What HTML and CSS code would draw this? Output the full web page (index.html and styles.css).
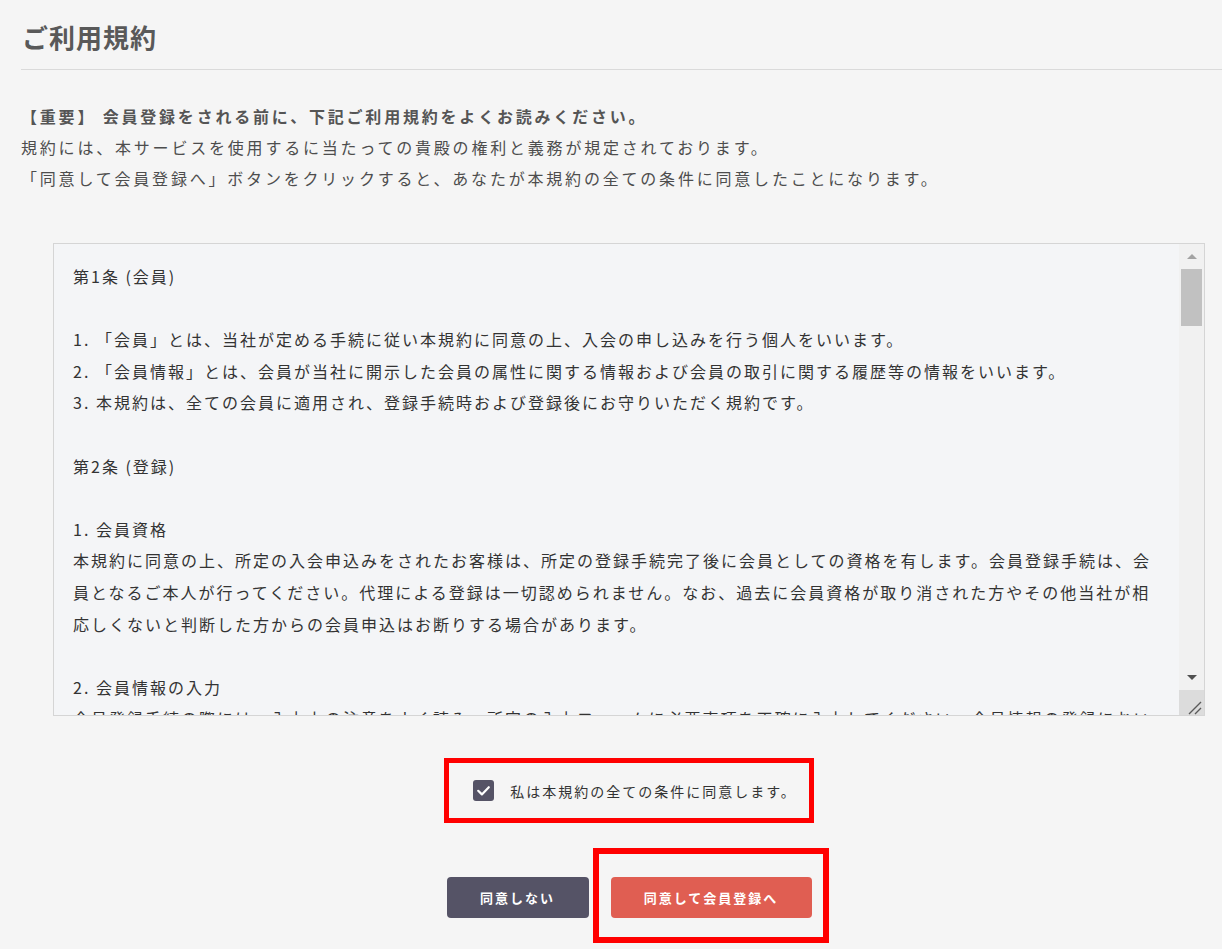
FILE: index.html
```html
<!DOCTYPE html>
<html lang="ja">
<head>
<meta charset="utf-8">
<title>ご利用規約</title>
<link rel="stylesheet" href="styles.css">
</head>
<body>
<div class="page">
  <div class="title-bar">
    <h1 class="title">ご利用規約</h1>
  </div>
  <p class="intro"><strong>【重要】 会員登録をされる前に、下記ご利用規約をよくお読みください。</strong><br>規約には、本サービスを使用するに当たっての貴殿の権利と義務が規定されております。<br>「同意して会員登録へ」ボタンをクリックすると、あなたが本規約の全ての条件に同意したことになります。</p>

  <div class="terms">
    <div class="terms-body">第1条 (会員)

1. 「会員」とは、当社が定める手続に従い本規約に同意の上、入会の申し込みを行う個人をいいます。
2. 「会員情報」とは、会員が当社に開示した会員の属性に関する情報および会員の取引に関する履歴等の情報をいいます。
3. 本規約は、全ての会員に適用され、登録手続時および登録後にお守りいただく規約です。

第2条 (登録)

1. 会員資格
本規約に同意の上、所定の入会申込みをされたお客様は、所定の登録手続完了後に会員としての資格を有します。会員登録手続は、会員となるご本人が行ってください。代理による登録は一切認められません。なお、過去に会員資格が取り消された方やその他当社が相応しくないと判断した方からの会員申込はお断りする場合があります。

2. 会員情報の入力
会員登録手続の際には、入力上の注意をよく読み、所定の入力フォームに必要事項を正確に入力してください。会員情報の登録において、特殊記号・旧漢字・ローマ数字などはご使用になれません。</div>
    <div class="scrollbar">
      <div class="sb-btn"><span class="arrow-up"></span></div>
      <div class="sb-track"><div class="sb-thumb"></div></div>
      <div class="sb-btn"><span class="arrow-down"></span></div>
      <div class="sb-resizer">
        <svg width="25" height="25" viewBox="0 0 25 25"><path d="M10 24 L22 12 M16 24 L22 18" stroke="#5a5a5a" stroke-width="1.4" fill="none"/></svg>
      </div>
    </div>
  </div>

  <div class="consent">
    <label class="consent-box">
      <span class="checkbox"><svg width="21" height="21" viewBox="0 0 21 21"><path d="M5.2 10.8 L8.9 14.4 L15.8 7.2" stroke="#fff" stroke-width="2.2" fill="none" stroke-linecap="round" stroke-linejoin="round"/></svg></span>
      <span class="consent-text">私は本規約の全ての条件に同意します。</span>
    </label>
  </div>

  <div class="actions">
    <button class="btn btn-decline">同意しない</button>
    <span class="agree-wrap"><button class="btn btn-agree">同意して会員登録へ</button></span>
  </div>
</div>
</body>
</html>
```

FILE: styles.css
```css
html, body {
  margin: 0;
  background: #f5f5f5;
}
body {
  font-family: "Noto Sans CJK JP", "Noto Sans", sans-serif;
  color: #4d4d4d;
}
.page {
  padding: 0 0 31px 21px;
}
.title-bar {
  padding: 19px 0 14px;
  border-bottom: 1px solid #dadada;
}
.title {
  margin: 0;
  padding-left: 1px;
  font-size: 26px;
  line-height: 36px;
  font-weight: 700;
  letter-spacing: 1px;
  color: #595959;
}
.intro {
  margin: 31px 0 0;
  font-size: 16px;
  line-height: 31px;
  letter-spacing: 2.8px;
  color: #4d4d4d;
}
.intro strong {
  font-weight: 700;
  color: #555;
}
.terms {
  margin: 49px 17px 0 32px;
  height: 473px;
  box-sizing: border-box;
  border: 1px solid #d5d5d5;
  background: #f4f5f7;
  display: flex;
}
.terms-body {
  flex: 1;
  overflow: hidden;
  padding: 17px 20px 0 19px;
  white-space: pre-wrap;
  font-size: 16px;
  line-height: 31.6px;
  letter-spacing: 2px;
  color: #333;
}
.scrollbar {
  width: 25px;
  display: flex;
  flex-direction: column;
  background: #f1f1f1;
}
.sb-btn {
  height: 25px;
  display: flex;
  align-items: center;
  justify-content: center;
}
.arrow-up {
  width: 0;
  height: 0;
  border-left: 5px solid transparent;
  border-right: 5px solid transparent;
  border-bottom: 5px solid #a3a3a3;
}
.arrow-down {
  width: 0;
  height: 0;
  border-left: 5px solid transparent;
  border-right: 5px solid transparent;
  border-top: 5px solid #505050;
}
.sb-track {
  flex: 1;
  padding: 0 2px;
}
.sb-thumb {
  height: 57px;
  background: #c1c1c1;
}
.sb-resizer {
  height: 25px;
  background: #dcdcdc;
}
.sb-resizer svg {
  display: block;
}
.consent {
  display: flex;
  justify-content: center;
  margin: 42px 17px 0 32px;
}
.consent-box {
  border: 5px solid #ff0000;
  padding: 0 12px 0 24px;
  height: 55px;
  display: flex;
  align-items: center;
  gap: 16px;
}
.checkbox {
  width: 21px;
  height: 21px;
  border-radius: 3px;
  background: #555366;
  display: flex;
}
.consent-text {
  font-size: 14px;
  line-height: 20px;
  letter-spacing: 2px;
  color: #333;
}
.actions {
  display: flex;
  justify-content: center;
  gap: 22px;
  margin: 54px 17px 0 32px;
}
.agree-wrap {
  position: relative;
  display: flex;
}
.agree-wrap::after {
  content: "";
  position: absolute;
  left: -18px;
  right: -17px;
  top: -29px;
  bottom: -25px;
  border: 6px solid #ff0000;
  pointer-events: none;
}
.btn {
  height: 41px;
  border: 0;
  border-radius: 4px;
  color: #fff;
  font-family: "Noto Sans CJK JP", "Noto Sans", sans-serif;
  font-weight: 700;
  font-size: 13px;
  letter-spacing: 2px;
  padding: 0;
}
.btn-decline {
  width: 142px;
  background: #555366;
}
.btn-agree {
  width: 201px;
  background: #e05e52;
}
```
